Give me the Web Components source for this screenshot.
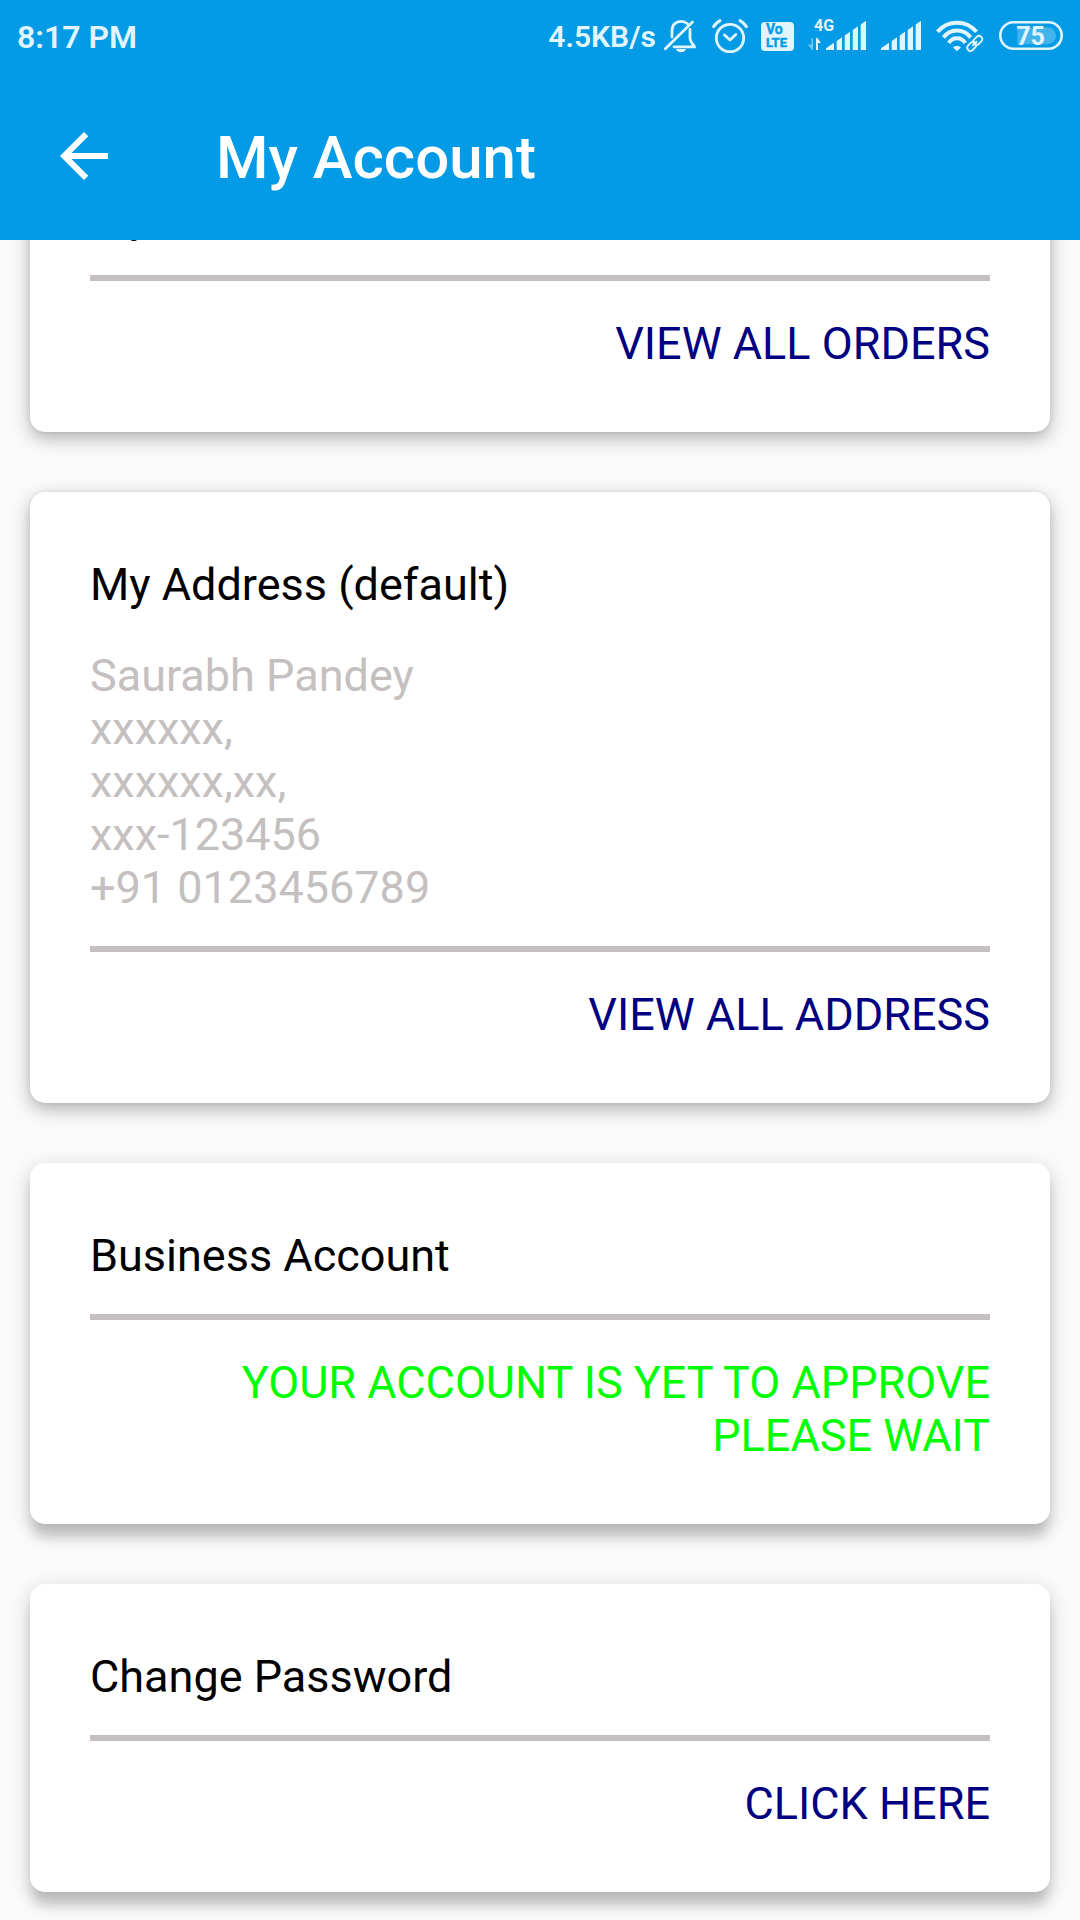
<!DOCTYPE html>
<html lang="en">
<head>
<meta charset="utf-8">
<meta name="viewport" content="width=device-width, initial-scale=1">
<title>My Account</title>
<style>
  body { margin: 0; font-family: Roboto, "Noto Sans", sans-serif; background: #fafafa; }
</style>
</head>
<body>
<account-app>
  <status-bar slot="header" time="8:17 PM" speed="4.5KB/s" battery="75"></status-bar>
  <app-toolbar slot="header">My Account</app-toolbar>

  <account-card heading="My Orders">
    <card-action slot="action">VIEW ALL ORDERS</card-action>
  </account-card>
  <account-card heading="My Address (default)">
    <address-block>
      <span>Saurabh Pandey</span>
      <span>xxxxxx,</span>
      <span>xxxxxx,xx,</span>
      <span>xxx-123456</span>
      <span>+91 0123456789</span>
    </address-block>
    <card-action slot="action">VIEW ALL ADDRESS</card-action>
  </account-card>
  <account-card heading="Business Account" depth="low">
    <status-note slot="action">YOUR ACCOUNT IS YET TO APPROVE PLEASE WAIT</status-note>
  </account-card>
  <account-card heading="Change Password" depth="low">
    <card-action slot="action">CLICK HERE</card-action>
  </account-card>
</account-app>

<script>
const define = (name, html, setup) => {
  const template = document.createElement('template');
  template.innerHTML = html;
  customElements.define(name, class extends HTMLElement {
    connectedCallback() {
      if (this.shadowRoot) return;
      const root = this.attachShadow({ mode: 'open' });
      root.append(template.content.cloneNode(true));
      if (setup) setup(this, root);
    }
  });
};

define('status-bar', `
  <style>
    :host { display: flex; justify-content: space-between; align-items: center; height: 72px;
            padding: 2px 17px 0; box-sizing: border-box; color: #e1f5fe; font-weight: 600; }
    .time { font-size: 32px; line-height: 40px; }
    .speed { font-size: 30px; line-height: 40px; }
    .icons { display: flex; align-items: center; gap: 15px; }
    .group { display: flex; align-items: center; gap: 8px; }
    svg { display: block; height: 36px; overflow: visible; fill: none; stroke: none; }
    .line { stroke: currentColor; stroke-linecap: round; stroke-linejoin: round; }
    .solid { fill: currentColor; }
    text { font-weight: 700; }
  </style>
  <span class="time"></span>
  <div class="icons">
    <div class="group">
      <span class="speed"></span>
      <svg width="32" viewBox="0 1 32 36" aria-label="Silent">
        <g class="line" stroke-width="2.8">
          <path d="M8 19V12.500C8 7 12 3.300 17 3.300C19.500 3.300 21.800 4.300 23.500 5.800"/>
          <path d="M26 11.500V20C26 23 28 25.500 30.600 28.800H10"/>
          <path d="M28.500 4L1.300 30.800"/>
        </g>
        <path class="solid" d="M12 31H22C21 35.400 13 35.400 12 31Z"/>
      </svg>
    </div>
    <svg width="34" viewBox="0 1 34 36" aria-label="Alarm">
      <g class="line">
        <circle cx="19" cy="20" r="13.700" stroke-width="2.800"/>
        <path stroke-width="2.800" d="M13.500 17L19 22L24.800 16.500"/>
        <path stroke-width="3" d="M2.600 8.600C4.300 6 6.300 4 9 2.600M29 2.600C31.700 4 33.700 6 35.400 8.600"/>
      </g>
    </svg>
    <svg width="33" viewBox="-1 1 33 36" aria-label="VoLTE">
      <rect class="solid" y="4" width="33" height="29" rx="4"/>
      <g fill="#039be5" stroke="#039be5" stroke-width=".4"><text x="5" y="16" font-size="14">Vo</text><text x="5" y="29" font-size="13">LTE</text></g>
    </svg>
    <svg width="58" viewBox="0 1 58 36" aria-label="4G signal">
      <text class="solid" x="6" y="13" font-size="16">4G</text>
      <path class="solid" opacity=".5" d="M3.500 20H5V32H4L0 26.500H3.500Z"/>
      <path class="solid" d="M8 32V20H9.500L13 25H10V32Z"/>
      <path class="solid" d="M18 32V30.300L26 24.800V32ZM28.700 32V23L34 19.300V32ZM36.700 32V17.400L42 13.800V32ZM44.700 32V11.900L50 8.300V32ZM52.700 32V6.400L58 2.800V32Z"/>
    </svg>
    <svg width="40" viewBox="18 1 40 36" aria-label="Signal">
      <path class="solid" d="M18 32V30.300L26 24.800V32ZM28.700 32V23L34 19.300V32ZM36.700 32V17.400L42 13.800V32ZM44.700 32V11.900L50 8.300V32ZM52.700 32V6.400L58 2.800V32Z"/>
    </svg>
    <svg width="48" viewBox="0 1 48 36" aria-label="Wi-Fi">
      <g stroke="currentColor" stroke-width="4">
        <path d="M1.500 13.800A25.500 25.500 0 0 1 40.500 13.800"/>
        <path d="M7.500 19.500A16.500 16.500 0 0 1 34.500 19.500"/>
        <path d="M12.800 25A9.500 9.500 0 0 1 29.200 25"/>
      </g>
      <path class="solid" d="M17 29.500Q21 26 25 29.500L21 33.300Z"/>
      <g transform="rotate(-45 38.700 25.500)">
        <rect x="29.500" y="22" width="18.500" height="7" rx="3.500" stroke="#039be5" stroke-width="4"/>
        <g stroke="currentColor" stroke-width="1.800">
          <rect x="29.500" y="22.300" width="10" height="6.400" rx="3.200"/>
          <rect x="38" y="22.300" width="10" height="6.400" rx="3.200"/>
          <path d="M35.500 25.500H42"/>
        </g>
      </g>
    </svg>
    <svg width="64" viewBox="0 1 64 36" aria-label="Battery">
      <rect x="1.300" y="4.300" width="61.400" height="26.400" rx="13.200" stroke="currentColor" stroke-width="2.600"/>
      <path class="solid" opacity=".28" d="M18.300 9.300H48.500A8.500 8.500 0 0 1 48.500 26.300H18.300Z"/>
      <text class="solid battery" x="31.500" y="26.700" font-size="25" text-anchor="middle"></text>
    </svg>
  </div>`, (host, root) => {
  root.querySelector('.time').textContent = host.getAttribute('time');
  root.querySelector('.speed').textContent = host.getAttribute('speed');
  root.querySelector('.battery').textContent = host.getAttribute('battery');
});

define('app-toolbar', `
  <style>
    :host { display: flex; align-items: center; gap: 96px; height: 168px; padding: 0 48px; color: #fff; }
    button { display: block; width: 72px; height: 72px; margin: 0; padding: 0; border: 0; background: none; color: inherit; }
    svg { display: block; width: 72px; height: 72px; fill: currentColor; }
    h1 { margin: 0; padding-top: 4px; font-size: 60px; line-height: 72px; font-weight: 500; }
  </style>
  <button type="button" aria-label="Back">
    <svg viewBox="0 0 24 24"><path d="M20 11H7.830l5.590-5.590L12 4l-8 8 8 8 1.410-1.410L7.830 13H20z"/></svg>
  </button>
  <h1><slot></slot></h1>`);

define('card-action', `
  <style>
    :host { display: block; }
    a { color: #000080; text-decoration: none; }
  </style>
  <a href="#"><slot></slot></a>`);

define('status-note', `
  <style>:host { display: block; color: #0f0; }</style>
  <slot></slot>`);

define('address-block', `
  <style>
    :host { display: flex; flex-direction: column; margin-top: 38px; color: #c4c0c0; }
  </style>
  <slot></slot>`);

define('account-card', `
  <style>
    :host { display: block; padding: 66px 60px 62px; border-radius: 15px; background: #fff;
            font-size: 45px; line-height: 53px;
            box-shadow: 0 6px 18px rgba(0, 0, 0, .3), 0 0 4px rgba(0, 0, 0, .08); }
    :host([depth="low"]) { box-shadow: 0 16px 12px -2px rgba(0, 0, 0, .14), 0 6px 20px rgba(0, 0, 0, .2); }
    h2 { margin: 0; font: inherit; color: #000; }
    hr { height: 6px; margin: 32px 0 36px; border: 0; background: #c4c0c0; }
    .action { text-align: right; }
  </style>
  <h2></h2>
  <slot></slot>
  <hr>
  <div class="action"><slot name="action"></slot></div>`, (host, root) => {
  root.querySelector('h2').textContent = host.getAttribute('heading');
});

define('account-app', `
  <style>
    :host { display: flex; flex-direction: column; height: 100vh; overflow: hidden; }
    header { flex: none; background: #039be5; }
    main { flex: 1; min-height: 0; overflow-y: auto; scrollbar-width: none; }
    .list { display: flex; flex-direction: column; gap: 60px; padding: 30px; }
  </style>
  <header><slot name="header"></slot></header>
  <main><div class="list"><slot></slot></div></main>`, (host, root) => {
  // Open with the first card partly scrolled under the toolbar.
  const restore = () => { root.querySelector('main').scrollTop = 146; };
  restore();
  requestAnimationFrame(restore);
});
document.querySelector('account-app').shadowRoot.querySelector('main').scrollTop = 146;
</script>
</body>
</html>
